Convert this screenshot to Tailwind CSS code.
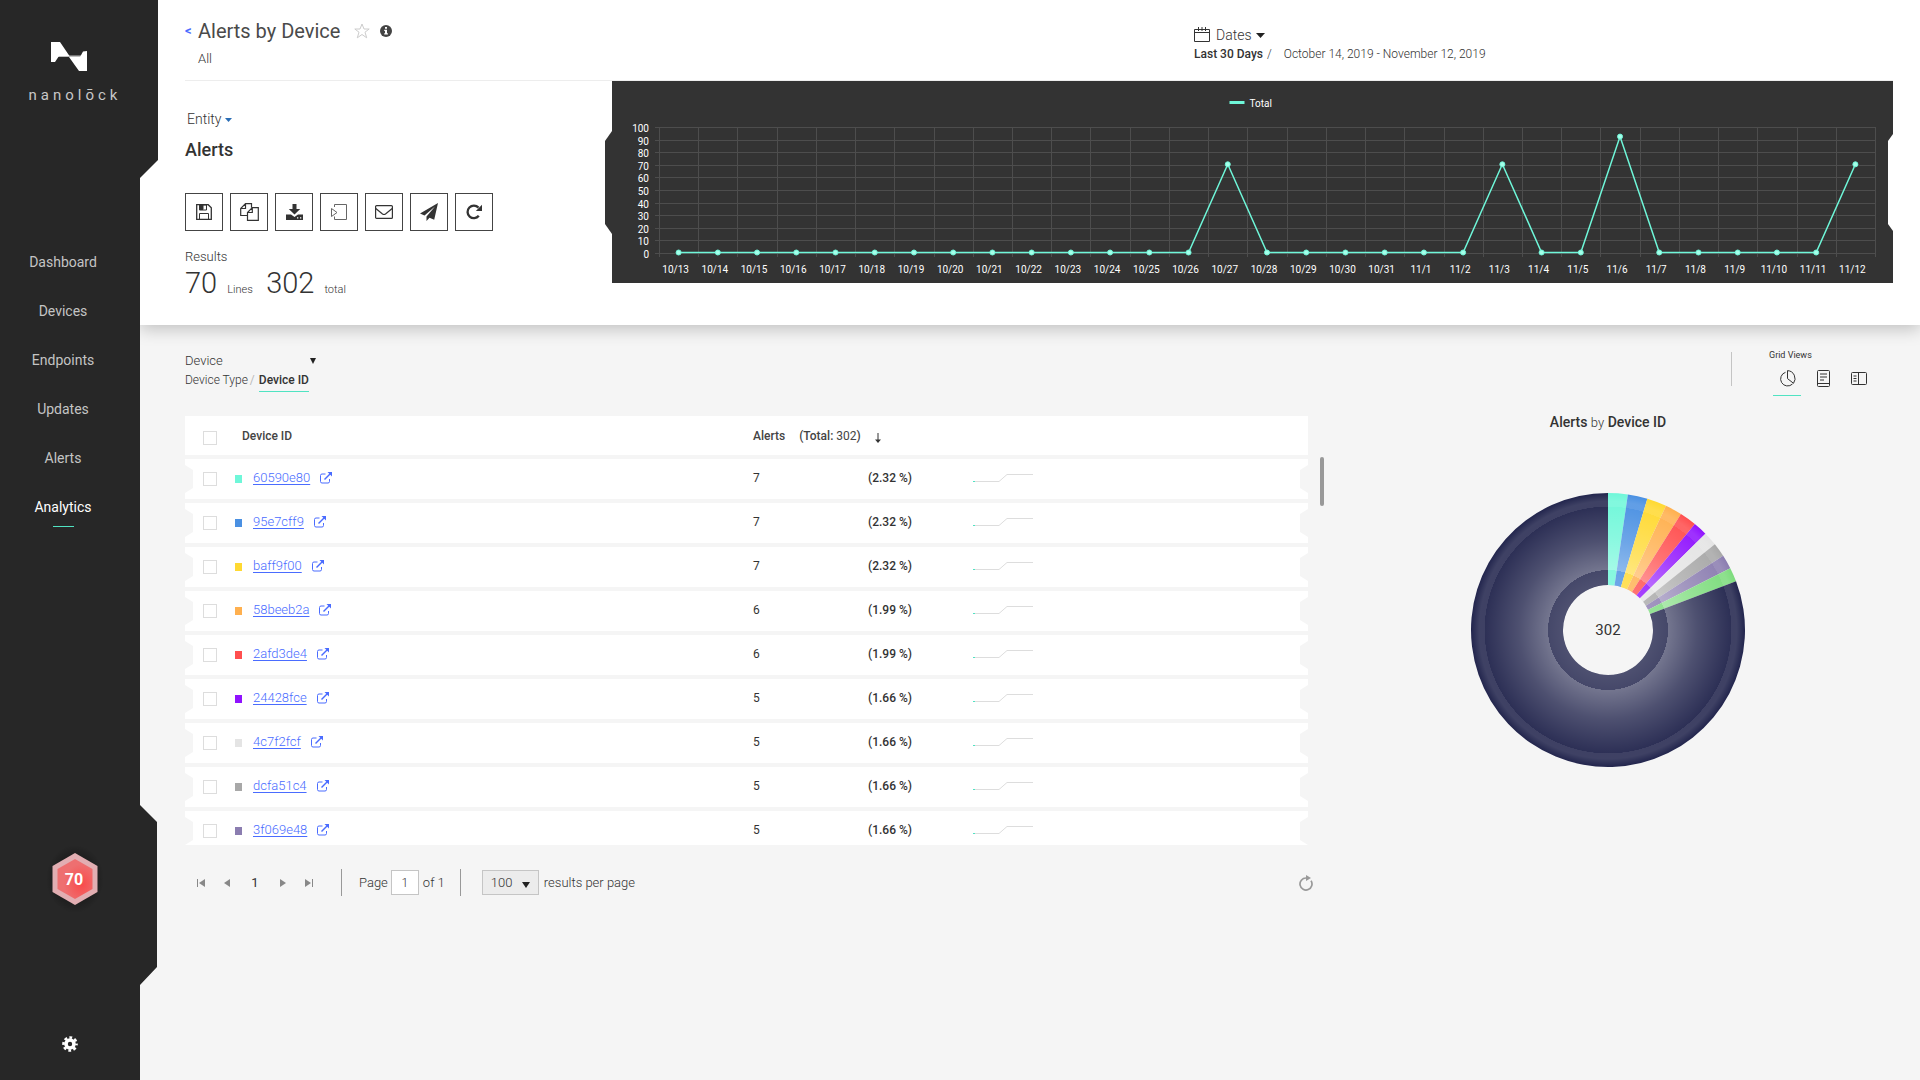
<!DOCTYPE html>
<html lang="en">
<head>
    <meta charset="UTF-8">
    <meta name="viewport" content="width=device-width, initial-scale=1.0">
    <title>Alerts by Device</title>
    <script src="https://cdn.jsdelivr.net/npm/@tailwindcss/browser@4"></script>
</head>
<body class="flex min-h-screen bg-[#f5f5f5] font-[Roboto,'Liberation_Sans',sans-serif] text-[13px] leading-4 text-[#333]">

<!-- Sidebar -->
<aside class="relative z-10 flex w-[158px] -mr-[18px] shrink-0 flex-col bg-[#272727] [clip-path:polygon(0_0,100%_0,100%_160px,140px_178px,140px_805px,157px_822px,157px_967px,140px_985px,140px_100%,0_100%)]">
    <a href="#" aria-label="nanolock" class="flex h-[237px] w-[146px] flex-col items-center pt-[42px]">
        <svg class="h-[29px] w-9 -ml-2" viewBox="0 0 36 29" fill="#fff">
            <path d="M0 0h9l9.500 14H8l-4 6H0z"/>
            <path d="M36 29h-8L18 15h11l3-5.500 4-.5z"/>
            <path d="M7 13.500h23v1.500H7z" opacity=".7"/>
        </svg>
        <span class="mt-3 pl-1 text-[15px] leading-6 tracking-[4px] text-[#c8c8c8]">nanolōck</span>
    </a>
    <nav>
        <ul class="flex w-[126px] flex-col gap-[17px] text-center text-[14px] leading-8 text-[#c4c4c4]">
            <li class="mt-[9px]"><a href="#">Dashboard</a></li>
            <li><a href="#">Devices</a></li>
            <li><a href="#">Endpoints</a></li>
            <li><a href="#">Updates</a></li>
            <li><a href="#">Alerts</a></li>
            <li class="text-white"><a href="#" aria-current="page">Analytics</a>
                <div class="mx-auto mt-[3px] h-px w-[21px] bg-[#50e3c2]"></div>
            </li>
        </ul>
    </nav>
    <a href="#" class="ml-[44px] mt-[318px] block h-[68px] w-[60px]">
        <svg class="h-[68px] w-[60px]" viewBox="0 0 60 68">
            <defs>
                <radialGradient id="hexGlow" cx=".68" cy=".62" r=".5">
                    <stop offset="0" stop-color="#f94a4a"/>
                    <stop offset="1" stop-color="#ee6f70"/>
                </radialGradient>
                <radialGradient id="hexShade">
                    <stop offset=".6" stop-color="#000" stop-opacity=".3"/>
                    <stop offset="1" stop-color="#000" stop-opacity="0"/>
                </radialGradient>
            </defs>
            <ellipse cx="31" cy="34" rx="29" ry="34" fill="url(#hexShade)"/>
            <path d="M31 8l22.500 13v26L31 60 8.500 47V21z" fill="#e2aeb2"/>
            <path d="M31 14l17.500 10v20L31 54 13.500 44V24z" fill="url(#hexGlow)"/>
            <text x="30" y="40" text-anchor="middle" fill="#fff" class="text-[16px] font-bold">70</text>
        </svg>
    </a>
    <button type="button" aria-label="Settings" class="mb-7 ml-[62px] mt-auto h-4 w-4 text-white">
        <svg viewBox="0 0 16 16" class="h-4 w-4">
            <circle cx="8" cy="8" r="4" fill="none" stroke="currentColor" stroke-width="3.600"/>
            <circle cx="8" cy="8" r="6.500" fill="none" stroke="currentColor" stroke-width="2.600" stroke-dasharray="2.800 2.305" stroke-dashoffset="1.400"/>
        </svg>
    </button>
</aside>

<main class="min-w-0 flex-1">
    <!-- Header -->
    <header class="bg-white pb-[19px] pl-[45px] pr-[27px] shadow-[0_4px_16px_rgba(0,0,0,0.22)]">
        <div class="flex h-[81px] border-b border-[#ededed]">
            <div class="w-[1009px] pt-[18px]">
                <div class="flex items-center">
                    <a href="#" aria-label="Back" class="w-[13px] text-[13px] font-bold text-[#4a6cff]">&lt;</a>
                    <h1 class="text-[20px] leading-[26px] text-[#4a4a4a]">Alerts by Device</h1>
                    <button type="button" aria-label="Favorite" class="ml-[14px]">
                        <svg class="h-4 w-4" viewBox="0 0 16 16" fill="none" stroke="#ccc"><path d="M8 1l2 5h5.200l-4.200 3.200 1.700 5.600L8 11.500l-4.700 3.300L5 9.200.8 6H6z"/></svg>
                    </button>
                    <button type="button" aria-label="Info" class="ml-[10px]">
                        <svg class="h-3 w-3" viewBox="0 0 12 12"><circle cx="6" cy="6" r="6" fill="#444"/><path d="M5 2h2v1.700H5zM4.200 4.800H7v3.400h.9v1.300H4.200V8.200H5V6.100h-.8z" fill="#fff"/></svg>
                    </button>
                </div>
                <div class="ml-[13px] mt-[7px] font-light">All</div>
            </div>
            <div class="pt-[26px]">
                <button type="button" class="flex items-center text-[14px] font-light leading-[18px]">
                    <svg class="mr-1.5 h-4 w-4" viewBox="0 0 16 16" fill="none" stroke="#333"><path d="M.5 2.500h15v12H.5zM.5 5.500h15M4.500 0v4M8 0v4M11.500 0v4"/></svg>
                    Dates
                    <svg class="ml-1 h-[5px] w-[9px]" viewBox="0 0 9 5"><path d="M0 0h9L4.500 5z" fill="#222"/></svg>
                </button>
                <div class="flex text-[12px] leading-5">
                    <span class="font-medium">Last 30 Days</span>
                    <span class="ml-1 mr-3 font-light">/</span>
                    <span class="font-light">October 14, 2019 - November 12, 2019</span>
                </div>
            </div>
        </div>

        <div class="flex items-start">
            <section class="w-[427px] shrink-0">
                <button type="button" class="mt-[29px] flex items-center pl-0.5 text-[14px] font-light leading-[18px]">Entity
                    <svg class="ml-1 mt-0.5 h-1 w-[7px]" viewBox="0 0 7 4"><path d="M0 0h7L3.500 4z" fill="#2a6db5"/></svg>
                </button>
                <h2 class="mt-[10px] text-[18px] font-medium leading-6">Alerts</h2>
                <div class="mt-[31px] flex gap-[7px] text-[#333]">
                    <button type="button" aria-label="Save" class="flex h-[38px] w-[38px] items-center justify-center border border-[#444]">
                        <svg class="h-4 w-4" viewBox="0 0 16 16" fill="none" stroke="currentColor"><path d="M.7.7h11.500l3.100 3.100v11.500H.7z" stroke-width="1.300"/><path d="M3.500 15V9.500h9V15"/><path d="M3.500 1h7v5h-7z"/><path d="M4 1h3v4.500H4z" fill="currentColor"/></svg>
                    </button>
                    <button type="button" aria-label="Copy" class="flex h-[38px] w-[38px] items-center justify-center border border-[#444]">
                        <svg class="h-[18px] w-[19px]" viewBox="0 0 19 18" fill="none" stroke="currentColor" stroke-width="1.200"><path d="M7.500 12.500H.7V5.500L5.500.7h6v4M.7 5.500h4.800V.7"/><path d="M12.300 4.700h6v12.600H7.500V9.500zM7.500 9.500h4.800V4.700"/></svg>
                    </button>
                    <button type="button" aria-label="Download" class="flex h-[38px] w-[38px] items-center justify-center border border-[#444]">
                        <svg class="h-4 w-[17px]" viewBox="0 0 17 16" fill="currentColor"><path d="M6.500 0h4v5h3.700L8.500 10.500 2.800 5h3.700z"/><path fill-rule="evenodd" d="M0 10.500h5l3.500 2.500 3.500-2.500h5V16H0zM11 13.300v1.200h1.300v-1.200zm3 0v1.200h1.300v-1.200z"/></svg>
                    </button>
                    <button type="button" aria-label="Import" class="flex h-[38px] w-[38px] items-center justify-center border border-[#444]">
                        <svg class="h-4 w-4" viewBox="0 0 16 16" fill="none" stroke="#666"><path d="M3.500 3V.5h12v15h-12v-3"/><path d="M.5 4.500v8L6 8.500z"/></svg>
                    </button>
                    <button type="button" aria-label="Mail" class="flex h-[38px] w-[38px] items-center justify-center border border-[#444]">
                        <svg class="h-[14px] w-[18px]" viewBox="0 0 18 14" fill="none" stroke="currentColor" stroke-width="1.200"><rect x=".6" y=".6" width="16.800" height="12.800" rx="1"/><path d="M.8 3.500L7.500 9q1.500 1 3 0l6.700-5.500"/></svg>
                    </button>
                    <button type="button" aria-label="Send" class="flex h-[38px] w-[38px] items-center justify-center border border-[#444]">
                        <svg class="h-[18px] w-[18px]" viewBox="0 0 18 18" fill="currentColor"><path d="M18 0L0 10.500l4.500 2L15 3.500 6.500 13.500V18l3-3.300 4.700 2z"/></svg>
                    </button>
                    <button type="button" aria-label="Refresh" class="flex h-[38px] w-[38px] items-center justify-center border border-[#444]">
                        <svg class="h-4 w-4" viewBox="0 0 16 16"><path d="M12.800 11.800A6.300 6.300 0 1 1 12.500 3.600" fill="none" stroke="currentColor" stroke-width="2.300"/><path d="M16 .8v6.200H9.800z" fill="currentColor"/></svg>
                    </button>
                </div>
                <div class="mt-[18px] font-light">Results</div>
                <div class="mt-0.5 flex items-baseline text-[11px] font-light leading-8">
                    <span class="text-[29px]">70</span>
                    <span class="ml-[10px] w-[39px]">Lines</span>
                    <span class="text-[29px]">302</span>
                    <span class="ml-[10px]">total</span>
                </div>
            </section>

            <!-- Timeline chart -->
            <section id="timelineBox" class="relative h-[202px] min-w-0 flex-1 bg-[#333]">
                <div class="absolute -left-[7px] top-[50px] h-[103px] w-[7px] bg-[#333] [clip-path:polygon(100%_0,0_10px,0_93px,100%_100%)]"></div>
                <div class="absolute right-0 top-[53px] h-[97px] w-[5px] bg-white [clip-path:polygon(100%_0,0_7px,0_90px,100%_100%)]"></div>
                <svg id="timeline" class="block h-full w-full text-[10px]"></svg>
            </section>
        </div>
    </header>

    <div class="flex pl-[45px]">
        <!-- Table -->
        <section class="w-[1140px] shrink-0 pt-[28px]">
            <button type="button" class="flex w-[131px] items-center justify-between font-light">Device
                <svg class="h-1.5 w-1.5" viewBox="0 0 6 6"><path d="M0 0h6L3 6z" fill="#222"/></svg>
            </button>
            <div class="mt-0.5 flex text-[12px] leading-[18px]">
                <a href="#" class="font-light">Device Type</a>
                <span class="ml-0.5 mr-1 text-[#bbb]">/</span>
                <a href="#" class="border-b border-[#50e3c2] pb-0.5 font-medium">Device ID</a>
            </div>
            <div class="mt-5 flex">
                <div class="max-h-[433px] min-w-0 flex-1 overflow-hidden">
                    <table class="w-full table-fixed border-separate border-spacing-x-0 border-spacing-y-1 text-left">
                        <colgroup>
                            <col class="w-[50px]">
                            <col class="w-[518px]">
                            <col class="w-[115px]">
                            <col class="w-[105px]">
                            <col>
                        </colgroup>
                        <thead>
                            <tr class="h-[39px] bg-white text-[12px] text-[#444]">
                                <th class="pl-[18px]"><input type="checkbox" aria-label="Select all" class="mt-1 block h-[14px] w-[14px] appearance-none border border-[#ddd] bg-white"></th>
                                <th class="pl-[7px] font-medium">Device ID</th>
                                <th colspan="3" class="font-medium">
                                    <div class="flex items-center">Alerts
                                        <span class="ml-[14px]">(Total: <span class="font-normal">302</span>)</span>
                                        <svg class="ml-[14px] mt-1 h-[10px] w-1.5" viewBox="0 0 6 10"><path d="M3 0v7" stroke="#333"/><path d="M0 6.500h6L3 10z" fill="#333"/></svg>
                                    </div>
                                </th>
                            </tr>
                        </thead>
                        <tbody id="devices"></tbody>
                    </table>
                </div>
                <div class="ml-3 mr-px mt-[45px] h-[49px] w-[4px] rounded-sm bg-[#999]"></div>
            </div>

            <!-- Pager -->
            <div class="mt-6 flex h-[27px] items-center pl-3 pr-[12px] font-light">
                <button type="button" aria-label="First page"><svg class="h-2 w-2" viewBox="0 0 8 8" fill="#888"><path d="M0 0h1v8H0zM8 0v8L2 4z"/></svg></button>
                <button type="button" aria-label="Previous page" class="ml-[19px]"><svg class="h-2 w-1.5" viewBox="0 0 6 8" fill="#888"><path d="M6 0v8L0 4z"/></svg></button>
                <span class="w-[50px] text-center font-normal">1</span>
                <button type="button" aria-label="Next page"><svg class="h-2 w-1.5" viewBox="0 0 6 8" fill="#888"><path d="M0 0v8l6-4z"/></svg></button>
                <button type="button" aria-label="Last page" class="ml-[19px]"><svg class="h-2 w-2" viewBox="0 0 8 8" fill="#888"><path d="M7 0h1v8H7zM0 0v8l6-4z"/></svg></button>
                <div class="ml-7 h-full w-px bg-[#999]"></div>
                <label for="page" class="ml-[17px]">Page</label>
                <input id="page" type="text" value="1" class="ml-[3px] h-[25px] w-7 border border-[#c5c5c5] bg-white text-center text-[12px]">
                <span class="ml-1">of 1</span>
                <div class="ml-[15px] h-full w-px bg-[#999]"></div>
                <div class="relative ml-[21px]">
                    <select id="size" class="block h-[25px] w-[57px] appearance-none border border-[#c5c5c5] bg-[#ececec] pl-2"><option>100</option></select>
                    <svg class="pointer-events-none absolute right-[9px] top-3 h-1.5 w-2" viewBox="0 0 8 6"><path d="M0 0h8L4 6z" fill="#222"/></svg>
                </div>
                <label for="size" class="ml-[5px]">results per page</label>
                <button type="button" aria-label="Reload" class="ml-auto">
                    <svg class="h-4 w-[14px]" viewBox="0 0 14 16"><path d="M12 5.700A6 6 0 1 1 7 3" fill="none" stroke="#999" stroke-width="1.700"/><path d="M7 0l5 3-5 3z" fill="#999"/></svg>
                </button>
            </div>
        </section>

        <!-- Pie -->
        <section class="flex min-w-0 flex-1 flex-col pt-[27px]">
            <div class="mr-[47px] flex justify-end">
                <div class="mr-[37px] h-[34px] w-px bg-[#c4c4c4]"></div>
                <div class="w-[104px]">
                    <div class="text-[9px] leading-[7px]">Grid Views</div>
                    <div class="mt-[9px] flex gap-2">
                        <button type="button" aria-label="Pie view" class="ml-1 flex h-[28px] w-[28px] shrink-0 justify-center border-b border-[#50e3c2] pt-0.5">
                            <svg class="h-[17px] w-[17px]" viewBox="0 0 17 17" fill="none" stroke="#333"><path d="M6.500 2.300A7 7 0 1 0 13.500 14"/><path d="M8.500.6v8l6 4.700A8 8 0 0 0 8.500.6z"/></svg>
                        </button>
                        <button type="button" aria-label="Report view" class="flex h-[28px] w-[28px] shrink-0 justify-center pt-0.5">
                            <svg class="h-[17px] w-[13px]" viewBox="0 0 13 17" fill="none" stroke="#333"><rect x=".5" y=".5" width="12" height="16" rx="1"/><path d="M.5 13.500h12M3 4h7M3 7h7M3 10h4"/></svg>
                        </button>
                        <button type="button" aria-label="Split view" class="flex h-[28px] w-[28px] shrink-0 justify-center pt-1">
                            <svg class="h-[13px] w-4" viewBox="0 0 16 13" fill="none" stroke="#333"><rect x=".5" y=".5" width="15" height="12" rx="1"/><path d="M7.500.5v12M2.500 4h3M2.500 6.500h3M2.500 9h3"/></svg>
                        </button>
                    </div>
                </div>
            </div>
            <h3 class="mr-[29px] mt-[14px] text-center text-[14px] font-medium leading-6">Alerts <span class="text-[13px] font-light">by</span> Device ID</h3>
            <svg id="pie" class="mr-[29px] mt-[57px] h-[276px] w-[276px] self-center" viewBox="-138 -138 276 276">
                <defs>
                    <radialGradient id="shine" gradientUnits="userSpaceOnUse" cx="0" cy="0" r="137">
                        <stop offset=".328" stop-color="#fff" stop-opacity=".2"/>
                        <stop offset=".437" stop-color="#fff" stop-opacity=".16"/>
                        <stop offset=".438" stop-color="#fff" stop-opacity=".37"/>
                        <stop offset=".65" stop-color="#fff" stop-opacity=".2"/>
                        <stop offset=".9" stop-color="#fff" stop-opacity=".05"/>
                        <stop offset=".901" stop-color="#fff" stop-opacity=".13"/>
                        <stop offset=".94" stop-color="#fff" stop-opacity=".13"/>
                        <stop offset="1" stop-color="#fff" stop-opacity="0"/>
                    </radialGradient>
                </defs>
                <g id="slices"></g>
                <circle r="91" fill="none" stroke="url(#shine)" stroke-width="92"/>
                <text y="5" text-anchor="middle" fill="#333" class="text-[15px]">302</text>
            </svg>
        </section>
    </div>
</main>

<script>
const devices = [
    { id: '60590e80', count: 7, color: '#6ff7d9' },
    { id: '95e7cff9', count: 7, color: '#4a90e2' },
    { id: 'baff9f00', count: 7, color: '#ffd932' },
    { id: '58beeb2a', count: 6, color: '#ffb04f' },
    { id: '2afd3de4', count: 6, color: '#ff4f4f' },
    { id: '24428fce', count: 5, color: '#9013fe' },
    { id: '4c7f2fcf', count: 5, color: '#e4e4e4' },
    { id: 'dcfa51c4', count: 5, color: '#a8a8a8' },
    { id: '3f069e48', count: 5, color: '#8b7db0' }
];
const total = 302;

// table rows
document.getElementById('devices').innerHTML = devices.map(d => `
    <tr class="h-10">
        <td class="bg-white pl-[18px] [clip-path:polygon(0_0,100%_0,100%_100%,0_100%,0_34px,8px_29px,8px_11px,0_6px)]">
            <input type="checkbox" aria-label="Select ${d.id}" class="block h-[14px] w-[14px] appearance-none border border-[#ddd] bg-white">
        </td>
        <td class="bg-white">
            <div class="flex items-center pb-0.5">
                <span class="mt-0.5 h-2 w-[7px]" style="background:${d.color}"></span>
                <a href="#" class="ml-[11px] font-light text-[#4a6cff] underline underline-offset-2">${d.id}</a>
                <a href="#" aria-label="Open ${d.id}" class="ml-[10px]">
                    <svg class="h-3 w-3" viewBox="0 0 12 12" fill="none" stroke="#4a6cff"><path d="M5.500 2H2Q.5 2 .5 3.500v6Q.5 11 2 11h6q1.500 0 1.500-1.500V7"/><path d="M4.500 7.500l6-6" stroke-width="1.500"/><path d="M7.500 0H12v4.500z" fill="#4a6cff" stroke="none"/></svg>
                </a>
            </div>
        </td>
        <td class="bg-white pb-0.5 text-[12px]">${d.count}</td>
        <td class="bg-white pb-0.5 text-[12px] font-medium">(${(d.count / total * 100).toFixed(2)} %)</td>
        <td class="bg-white [clip-path:polygon(0_0,100%_0,100%_6px,calc(100%-8px)_11px,calc(100%-8px)_29px,100%_34px,100%_100%,0_100%)]">
            <svg class="-mt-1 h-[9px] w-[60px]" viewBox="0 0 60 9" fill="none"><path d="M0 8.500h26l8-7h26" stroke="#ddd"/><path d="M0 8.500h2" stroke="#50e3c2"/></svg>
        </td>
    </tr>`).join('');

// pie slices, clockwise from the top
const slices = devices.concat({ count: 5, color: '#7ddc7d' });
slices.push({ count: total - slices.reduce((s, d) => s + d.count, 0), color: '#22254d' });
let angle = 0;
document.getElementById('slices').innerHTML = slices.map(d => {
    const a = angle;
    const b = angle += d.count / total * Math.PI * 2;
    const p = (r, t) => `${(r * Math.sin(t)).toFixed(2)} ${(-r * Math.cos(t)).toFixed(2)}`;
    const large = b - a > Math.PI ? 1 : 0;
    return `<path fill="${d.color}" d="M${p(45, a)}L${p(137, a)}A137 137 0 ${large} 1 ${p(137, b)}L${p(45, b)}A45 45 0 ${large} 0 ${p(45, a)}z"/>`;
}).join('');

// timeline
const peaks = { '10/27': 70, '11/3': 70, '11/6': 92, '11/12': 70 };
const days = [];
for (let i = 13; i <= 31; i++) days.push('10/' + i);
for (let i = 1; i <= 12; i++) days.push('11/' + i);

const timelineBox = document.getElementById('timelineBox');

function drawTimeline() {
    const width = timelineBox.clientWidth;
    const left = 47, right = width - 18, top = 46, bottom = 172;
    const step = (right - left) / days.length;
    const y = v => bottom - v / 100 * (bottom - top);
    let out = '';
    for (let v = 0; v <= 100; v += 10) {
        const ly = Math.round(y(v)) + 0.5;
        out += `<path d="M${left - 4} ${ly}H${right}" stroke="#4d4d4d"/>`;
        out += `<text x="${left - 10}" y="${ly + 4}" text-anchor="end" fill="#fff">${v}</text>`;
    }
    for (let i = 0; i <= days.length; i++) {
        const lx = Math.round(left + i * step) + 0.5;
        out += `<path d="M${lx} ${top}V${bottom + 4}" stroke="#4d4d4d"/>`;
    }
    const points = days.map((d, i) => [left + (i + 0.5) * step, y(peaks[d] || 0) - 0.5]);
    out += `<polyline points="${points.join(' ')}" fill="none" stroke="#6ff7d9" stroke-width="1.500"/>`;
    points.forEach((p, i) => {
        out += `<circle cx="${p[0]}" cy="${p[1]}" r="2.500" fill="#a5ffe9" stroke="#6ff7d9"/>`;
        out += `<text x="${p[0] - 3}" y="192" text-anchor="middle" fill="#fff">${days[i]}</text>`;
    });
    const mid = width / 2;
    out += `<rect x="${mid - 23}" y="20" width="15" height="3" fill="#6ff7d9"/>`;
    out += `<text x="${mid - 3}" y="26" fill="#fff">Total</text>`;
    document.getElementById('timeline').innerHTML = out;
}
new ResizeObserver(drawTimeline).observe(timelineBox);
</script>
</body>
</html>
